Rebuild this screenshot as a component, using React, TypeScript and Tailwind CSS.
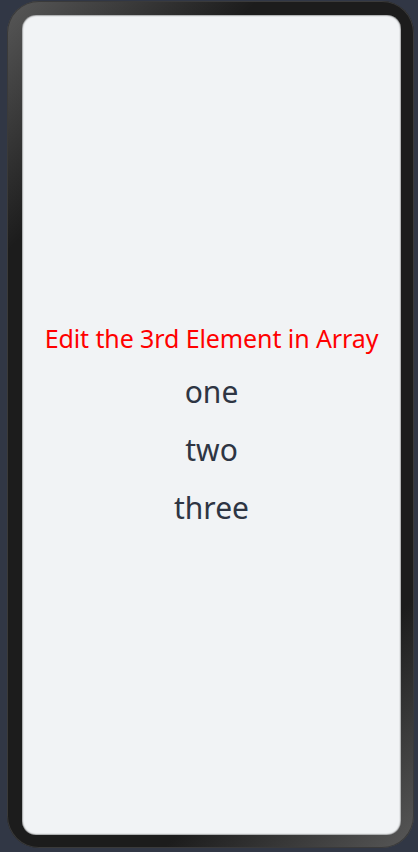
export default function App() {
  return (
    <div className="w-[418px] h-[852px] bg-[#313745] pl-[7px] pr-[4px] pt-[1px] pb-[4px]">
      <div className="relative h-full w-full rounded-[32px] bg-[linear-gradient(135deg,#585858_0%,#1c1c1c_20%,#1c1c1c_80%,#585858_100%)] pl-[15px] pr-[13px] pt-[14px] pb-[13px] shadow-[inset_0_0_0_1px_#3a3a3a]">
        <div
          className="flex h-full w-full flex-col items-center justify-center rounded-[14px] bg-[#f1f3f5] pt-[1px] shadow-[inset_0_0_2px_#000]"
          style={{ fontFamily: '"Noto Sans", "Open Sans", sans-serif' }}
        >
          <div className="text-[25px] leading-[34px] tracking-[-0.1px] text-[#ff0000] mb-[15px]">
            Edit the 3rd Element in Array
          </div>
          <div className="flex flex-col items-center gap-[14px] text-[30px] leading-[44px] text-[#2e3543]">
            <span>one</span>
            <span>two</span>
            <span>three</span>
          </div>
        </div>
      </div>
    </div>
  );
}
